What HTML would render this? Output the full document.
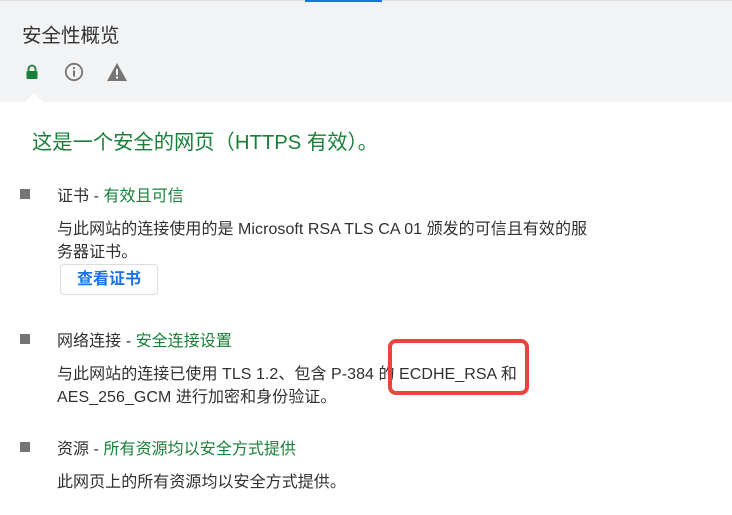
<!DOCTYPE html>
<html><head><meta charset="utf-8"><style>
*{margin:0;padding:0;box-sizing:border-box}
body{width:732px;height:515px;background:#fff;font-family:"Liberation Sans","Noto Sans CJK SC",sans-serif;color:#303030;position:relative;overflow:hidden}
.top{position:absolute;left:0;top:0;width:732px;height:102px;background:#f1f3f4}
.top:before{content:"";position:absolute;left:0;top:0;width:732px;height:1px;background:#ddd}
.bar{position:absolute;left:305px;top:0;width:77px;height:2px;background:#1a73e8}
.notch{position:absolute;left:23px;top:93px;width:0;height:0;border-left:11px solid transparent;border-right:11px solid transparent;border-bottom:10px solid #fff}
.t{position:absolute;white-space:nowrap}
.g{color:#188038}
.sq{position:absolute;left:20px;width:10px;height:10px;background:#757575}
.btn{position:absolute;left:60px;top:264px;width:98px;height:31px;border:1px solid #dadce0;border-radius:4px;color:#1a73e8;font-size:16px;text-align:center;line-height:29px;font-weight:bold}
.red{position:absolute;left:388px;top:339px;width:141px;height:56px;border:4px solid #e8453c;border-radius:8px}
.b{font-size:16px;letter-spacing:0.05px}
</style></head><body>
<div class="top"></div><div class="bar"></div>
<div class="t" style="left:22px;top:19px;font-size:19.5px;color:#333">安全性概览</div>
<svg class="t" style="left:24px;top:64px" width="16" height="16" viewBox="0 0 16 16"><path d="M4.5 7V5a3.5 3.5 0 0 1 7 0v2" fill="none" stroke="#188038" stroke-width="1.8"/><rect x="2.5" y="7" width="11" height="8" rx="1" fill="#188038"/></svg>
<svg class="t" style="left:64px;top:62px" width="20" height="20" viewBox="0 0 20 20"><circle cx="10" cy="10" r="8.2" fill="none" stroke="#757575" stroke-width="1.8"/><rect x="9" y="8.5" width="2" height="6" fill="#757575"/><rect x="9" y="5" width="2" height="2" fill="#757575"/></svg>
<svg class="t" style="left:106px;top:62px" width="22" height="20" viewBox="0 0 22 20"><path d="M11 1L21 19H1Z" fill="#757575"/><rect x="10" y="7" width="2" height="6" fill="#fff"/><rect x="10" y="14.5" width="2" height="2" fill="#fff"/></svg>
<div class="notch"></div>
<div class="t g" style="left:32px;top:125px;font-size:20.3px">这是一个安全的网页（HTTPS 有效）。</div>
<div class="sq" style="top:189px"></div>
<div class="t b" style="left:57px;top:182px">证书 - <span class="g">有效且可信</span></div>
<div class="t b" style="left:57px;top:215px">与此网站的连接使用的是 Microsoft RSA TLS CA 01 颁发的可信且有效的服</div>
<div class="t b" style="left:57px;top:238px">务器证书。</div>
<div class="btn">查看证书</div>
<div class="sq" style="top:334px"></div>
<div class="t b" style="left:57px;top:327px">网络连接 - <span class="g">安全连接设置</span></div>
<div class="t b" style="left:57px;top:360px">与此网站的连接已使用 TLS 1.2、包含 P-384 的 ECDHE_RSA 和</div>
<div class="t b" style="left:57px;top:383px">AES_256_GCM 进行加密和身份验证。</div>
<div class="red"></div>
<div class="sq" style="top:442px"></div>
<div class="t b" style="left:57px;top:435px">资源 - <span class="g">所有资源均以安全方式提供</span></div>
<div class="t b" style="left:57px;top:468px">此网页上的所有资源均以安全方式提供。</div>
</body></html>
